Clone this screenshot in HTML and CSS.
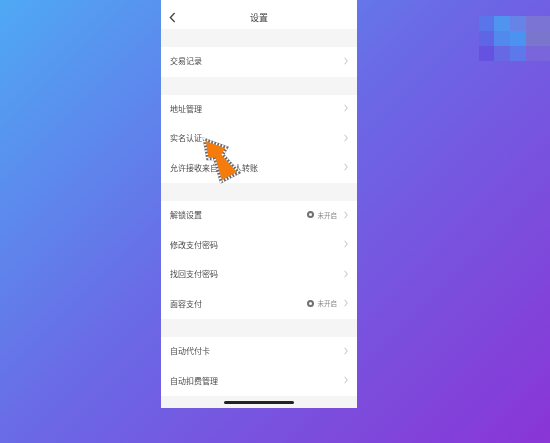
FILE: index.html
```html
<!DOCTYPE html>
<html lang="zh-CN">
<head>
<meta charset="utf-8">
<title>设置</title>
<link rel="stylesheet" href="styles.css">
</head>
<body>
<main class="phone">
  <header class="topbar">
    <svg class="back" viewBox="0 0 7 11" width="7" height="11"><path d="M5.6 1 1.400 5.500l4.200 4.500" fill="none" stroke="#444" stroke-width="1.300"/></svg>
    <h1 class="title">设置</h1>
  </header>
  <section class="group">
    <div class="row"><span>交易记录</span><svg class="chev" viewBox="0 0 4 8" width="4" height="8"><path d="M.7.8 3.300 4 .7 7.200" fill="none" stroke="#b5b5b5" stroke-width=".9"/></svg></div>
  </section>
  <section class="group">
    <div class="row"><span>地址管理</span><svg class="chev" viewBox="0 0 4 8" width="4" height="8"><path d="M.7.8 3.300 4 .7 7.200" fill="none" stroke="#b5b5b5" stroke-width=".9"/></svg></div>
    <div class="row"><span>实名认证</span><svg class="chev" viewBox="0 0 4 8" width="4" height="8"><path d="M.7.8 3.300 4 .7 7.200" fill="none" stroke="#b5b5b5" stroke-width=".9"/></svg></div>
    <div class="row"><span>允许接收来自陌生人转账</span><svg class="chev" viewBox="0 0 4 8" width="4" height="8"><path d="M.7.8 3.300 4 .7 7.200" fill="none" stroke="#b5b5b5" stroke-width=".9"/></svg></div>
  </section>
  <section class="group">
    <div class="row"><span>解锁设置</span><span class="status"><i class="dot"></i>未开启</span><svg class="chev" viewBox="0 0 4 8" width="4" height="8"><path d="M.7.8 3.300 4 .7 7.200" fill="none" stroke="#b5b5b5" stroke-width=".9"/></svg></div>
    <div class="row"><span>修改支付密码</span><svg class="chev" viewBox="0 0 4 8" width="4" height="8"><path d="M.7.8 3.300 4 .7 7.200" fill="none" stroke="#b5b5b5" stroke-width=".9"/></svg></div>
    <div class="row"><span>找回支付密码</span><svg class="chev" viewBox="0 0 4 8" width="4" height="8"><path d="M.7.8 3.300 4 .7 7.200" fill="none" stroke="#b5b5b5" stroke-width=".9"/></svg></div>
    <div class="row"><span>面容支付</span><span class="status"><i class="dot"></i>未开启</span><svg class="chev" viewBox="0 0 4 8" width="4" height="8"><path d="M.7.8 3.300 4 .7 7.200" fill="none" stroke="#b5b5b5" stroke-width=".9"/></svg></div>
  </section>
  <section class="group">
    <div class="row"><span>自动代付卡</span><svg class="chev" viewBox="0 0 4 8" width="4" height="8"><path d="M.7.8 3.300 4 .7 7.200" fill="none" stroke="#b5b5b5" stroke-width=".9"/></svg></div>
    <div class="row"><span>自动扣费管理</span><svg class="chev" viewBox="0 0 4 8" width="4" height="8"><path d="M.7.8 3.300 4 .7 7.200" fill="none" stroke="#b5b5b5" stroke-width=".9"/></svg></div>
  </section>
  <footer class="homebar"><span class="indicator"></span></footer>
</main>
<svg class="arrow" viewBox="0 0 50 56" width="50" height="56">
  <path d="M6 6 29 14.500 25 21.500 41 39.500 23 49 16.500 26 9.500 26Z" fill="#f57c0c" stroke="#666" stroke-width="2.600"/>
  <path d="M6 6 29 14.500 25 21.500 41 39.500 23 49 16.500 26 9.500 26Z" fill="none" stroke="#fff" stroke-width="2.600" stroke-dasharray="1.500 1.700"/>
</svg>
<div class="mosaic">
  <i class="m1"></i><i class="m2"></i><i class="m3"></i><i class="m4"></i>
  <i class="m5"></i><i class="m6"></i><i class="m7"></i><i class="m8"></i>
  <i class="m9"></i><i class="m10"></i><i class="m11"></i><i class="m12"></i>
</div>
</body>
</html>
```
FILE: styles.css
```css
* { box-sizing: border-box; }
html, body { height: 100%; }
body {
  margin: 0;
  overflow: hidden;
  background: linear-gradient(135deg, #4fa9f4 0%, #6a6ae6 45%, #8a35d6 100%);
  font-family: "Noto Sans CJK SC", "Noto Sans", sans-serif;
}
.phone {
  width: 196px;
  height: 408px;
  margin-left: 161px;
  background: #f5f5f5;
  display: flex;
  flex-direction: column;
  gap: 18px;
  filter: blur(.4px);
}
.topbar {
  height: 29px;
  background: #fff;
  display: flex;
  align-items: center;
  justify-content: center;
  position: relative;
  padding-top: 5px;
}
.back { position: absolute; left: 8px; top: 12px; }
.title { margin: 0; font-size: 9px; font-weight: 400; color: #3c3c3c; }
.group { background: #fff; }
.row {
  height: 29.500px;
  padding: 0 9px 2px;
  display: flex;
  align-items: center;
  font-size: 8px;
  color: #4a4a4a;
}
.row > span:first-child { flex: 1; }
.status {
  display: flex;
  align-items: center;
  gap: 4px;
  margin-right: 7px;
  font-size: 6.500px;
  color: #888;
}
.dot {
  flex: none;
  width: 7px;
  height: 7px;
  border: 2px solid #707070;
  border-radius: 50%;
}
.chev { flex: none; }
.homebar {
  flex: 1;
  margin-top: -18px;
  display: flex;
  justify-content: center;
  align-items: center;
  padding-top: 1px;
}
.indicator {
  width: 70px;
  height: 2.500px;
  border-radius: 2px;
  background: #222;
}
.arrow { position: absolute; left: 198px; top: 133px; filter: blur(.3px); }
.mosaic {
  position: absolute;
  left: 479px;
  top: 16px;
  width: 71px;
  height: 45px;
  display: grid;
  grid-template-columns: 15px 16px 16px 24px;
  grid-template-rows: repeat(3, 15px);
  filter: blur(.5px);
}
.m1 { background: #5a74ea; }
.m2 { background: #4f95f0; }
.m3 { background: #6684e8; }
.m4 { background: #7c74d4; }
.m5 { background: #5f66e6; }
.m6 { background: #5289ec; }
.m7 { background: #4c92f0; }
.m8 { background: #7a76cc; }
.m9 { background: #6552e0; }
.m10 { background: #6668e4; }
.m11 { background: #5c78ea; }
.m12 { background: #7a66da; }
```
